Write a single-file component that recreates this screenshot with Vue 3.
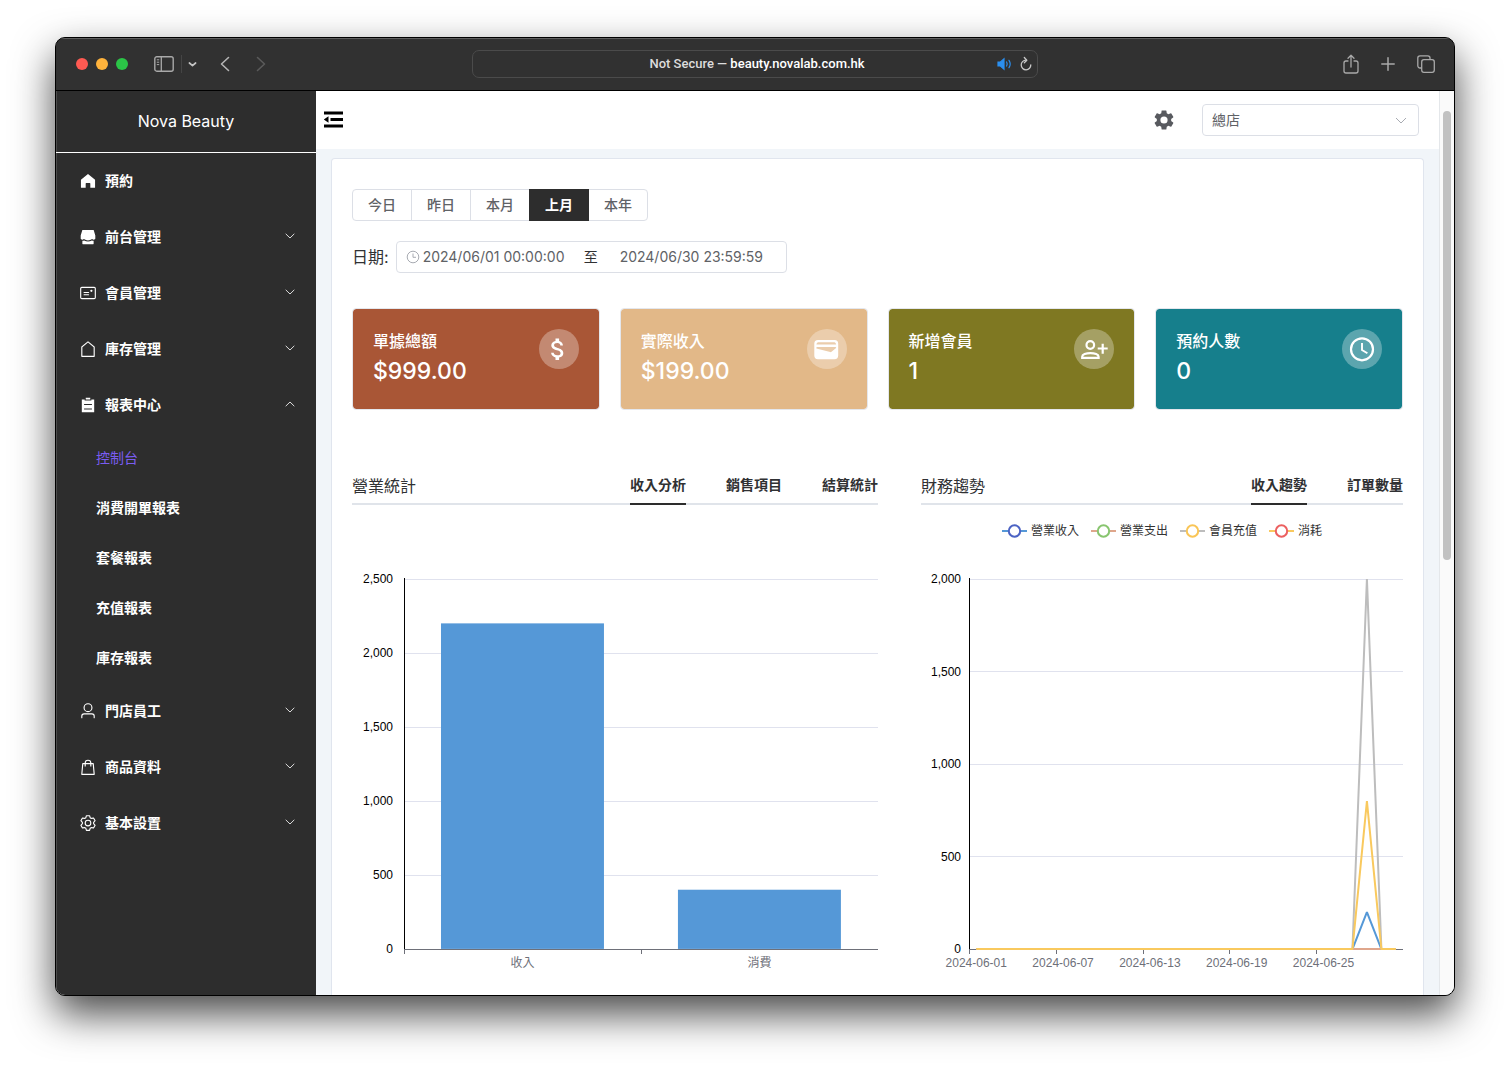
<script setup>
import { ref, computed } from 'vue'

const menu = [
  { label: '預約', icon: 'home' },
  { label: '前台管理', icon: 'shop', group: true },
  { label: '會員管理', icon: 'postcard', group: true },
  { label: '庫存管理', icon: 'house', group: true },
  {
    label: '報表中心', icon: 'list', group: true,
    children: ['控制台', '消費開單報表', '套餐報表', '充值報表', '庫存報表']
  },
  { label: '門店員工', icon: 'user', group: true },
  { label: '商品資料', icon: 'bag', group: true },
  { label: '基本設置', icon: 'setting', group: true }
]

const icons = {
  home: 'M512 110 110 440v440q0 20 20 20h250V660q0-30 30-30h204q30 0 30 30v240h250q20 0 20-20V440z',
  shop: 'M190 110h644l94 310v190q-90 100-180 20-236 150-472 0-90 80-180-20V420zM192 730q60 0 100-20 220 120 440 0 40 20 100 20v170q0 24-24 24H216q-24 0-24-24z',
  postcard: 'M160 224a32 32 0 0 0-32 32v512a32 32 0 0 0 32 32h704a32 32 0 0 0 32-32V256a32 32 0 0 0-32-32zm0-64h704a96 96 0 0 1 96 96v512a96 96 0 0 1-96 96H160a96 96 0 0 1-96-96V256a96 96 0 0 1 96-96M704 320a64 64 0 1 1 0 128 64 64 0 0 1 0-128M288 448h256q32 0 32 32t-32 32H288q-32 0-32-32t32-32m0 128h256q32 0 32 32t-32 32H288q-32 0-32-32t32-32',
  house: 'M192 413.952V896h640V413.952L512 147.328zM139.52 374.4l352-293.312a32 32 0 0 1 40.96 0l352 293.312A32 32 0 0 1 896 398.976V928a32 32 0 0 1-32 32H160a32 32 0 0 1-32-32V398.976a32 32 0 0 1 11.52-24.576',
  list: 'M704 192h160v736H160V192h160v64h384zM288 512h448v-64H288zm0 256h448v-64H288zm96-576V96h256v96z',
  user: 'M512 512a192 192 0 1 0 0-384 192 192 0 0 0 0 384m0 64a256 256 0 1 1 0-512 256 256 0 0 1 0 512m320 320v-96a96 96 0 0 0-96-96H288a96 96 0 0 0-96 96v96a32 32 0 1 1-64 0v-96a160 160 0 0 1 160-160h448a160 160 0 0 1 160 160v96a32 32 0 1 1-64 0',
  bag: 'M897 928a32 32 0 0 1-32 32H159a32 32 0 0 1-32-34l56-610a32 32 0 0 1 32-28h105a192 192 0 0 1 384 0h105a32 32 0 0 1 32 28l56 610zM384 288h256a128 128 0 0 0-256 0M320 352h-76l-50 544h636l-50-544h-76v128h-64V352H384v128h-64z',
  setting: 'M600.704 64a32 32 0 0 1 30.464 22.208l35.2 109.376c14.784 7.232 28.928 15.36 42.432 24.512l112.384-24.192a32 32 0 0 1 34.432 15.36L944.32 364.8a32 32 0 0 1-4.032 37.504l-77.12 85.12a357 357 0 0 1 0 49.024l77.12 85.248a32 32 0 0 1 4.032 37.504l-88.704 153.6a32 32 0 0 1-34.432 15.296L708.8 803.904c-13.44 9.088-27.648 17.28-42.368 24.512l-35.264 109.376A32 32 0 0 1 600.704 960H423.296a32 32 0 0 1-30.464-22.208L357.696 828.48a352 352 0 0 1-42.56-24.64l-112.32 24.256a32 32 0 0 1-34.432-15.36L79.68 659.2a32 32 0 0 1 4.032-37.504l77.12-85.248a357 357 0 0 1 0-48.896l-77.12-85.248A32 32 0 0 1 79.68 364.8l88.704-153.6a32 32 0 0 1 34.432-15.296l112.32 24.256c13.568-9.152 27.776-17.408 42.56-24.64l35.2-109.312A32 32 0 0 1 423.232 64H600.64zm-23.424 64H446.72l-36.352 113.088-24.512 11.968a294 294 0 0 0-34.816 20.096l-22.656 15.36-116.224-25.088-65.28 113.152 79.68 88.192-1.92 27.136a293 293 0 0 0 0 40.192l1.92 27.136-79.808 88.192 65.344 113.152 116.224-25.024 22.656 15.296a294 294 0 0 0 34.816 20.096l24.512 11.968L446.72 896h130.688l36.48-113.152 24.448-11.904a288 288 0 0 0 34.752-20.096l22.592-15.296 116.288 25.024 65.28-113.152-79.744-88.192 1.92-27.136a293 293 0 0 0 0-40.256l-1.92-27.136 79.808-88.128-65.344-113.152-116.288 24.96-22.592-15.232a288 288 0 0 0-34.752-20.096l-24.448-11.904L577.344 128zM512 320a192 192 0 1 1 0 384 192 192 0 0 1 0-384m0 64a128 128 0 1 0 0 256 128 128 0 0 0 0-256'
}

const openGroup = ref('報表中心')
const activePage = ref('控制台')
function toggle(item) {
  if (item.group) openGroup.value = openGroup.value === item.label ? '' : item.label
}

const ranges = ['今日', '昨日', '本月', '上月', '本年']
const range = ref('上月')
const start = ref('2024/06/01 00:00:00')
const end = ref('2024/06/30 23:59:59')

const stats = [
  { label: '單據總額', value: '$999.00', tone: 'rust', icon: 'dollar' },
  { label: '實際收入', value: '$199.00', tone: 'sand', icon: 'wallet' },
  { label: '新增會員', value: '1', tone: 'olive', icon: 'member' },
  { label: '預約人數', value: '0', tone: 'teal', icon: 'clock' }
]

const salesTabs = ['收入分析', '銷售項目', '結算統計']
const salesTab = ref('收入分析')
const trendTabs = ['收入趨勢', '訂單數量']
const trendTab = ref('收入趨勢')

// Plot height shared by both charts
const PLOT = 370

const barTicks = ['0', '500', '1,000', '1,500', '2,000', '2,500']
const bars = [
  { label: '收入', value: 2200 },
  { label: '消費', value: 400 }
].map((b, i) => {
  const band = 237
  const height = (b.value / 2500) * PLOT
  return { ...b, x: 52 + band * i + 37, mid: 52 + band * (i + 0.5), height }
})

const lineTicks = ['0', '500', '1,000', '1,500', '2,000']
const DAYS = 30
const step = 434 / DAYS
const dayLabels = [1, 7, 13, 19, 25].map(d => ({
  text: '2024-06-' + String(d).padStart(2, '0'),
  tick: 48 + (d - 1) * step,
  mid: 48 + (d - 0.5) * step
}))
const legend = [
  { name: '營業收入', line: '#5598d7', dot: '#4c63c4' },
  { name: '營業支出', line: '#dfa68c', dot: '#88c56f' },
  { name: '會員充值', line: '#bdbdbd', dot: '#f9c556' },
  { name: '消耗', line: '#f9c95e', dot: '#ec6060' }
]
const peaks = [200, 0, 2000, 800]
const series = computed(() =>
  legend.map((s, i) => {
    const points = Array.from({ length: DAYS }, (_, d) => {
      const v = d === 27 ? peaks[i] : 0
      return `${48 + (d + 0.5) * step},${22 + PLOT - (v / 2000) * PLOT}`
    }).join(' ')
    return { name: s.name, color: s.line, points }
  })
)
</script>

<template>
  <div class="desktop">
    <div class="window">
      <header class="toolbar">
        <div class="tools-left">
          <div class="lights"><i class="red"></i><i class="amber"></i><i class="green"></i></div>
          <button class="tool sidebar-btn" aria-label="Sidebar">
            <svg width="20" height="16" viewBox="0 0 20 16" fill="none" stroke="#a9a9a9">
              <rect x="0.8" y="0.8" width="18.4" height="14.4" rx="2" stroke-width="1.4" />
              <path d="M7.3 1v14" stroke-width="1.3" /><path d="M2.8 3.8h2.4M2.8 6.2h2.4M2.8 8.6h2.4" />
            </svg>
          </button>
          <span class="rule"></span>
          <button class="tool" aria-label="Tab groups">
            <svg width="9" height="16" viewBox="0 0 9 16" fill="none" stroke="#c4c4c4" stroke-width="1.7" stroke-linecap="round" stroke-linejoin="round"><path d="M1.4 7 4.5 9.6 7.6 7" /></svg>
          </button>
          <button class="tool back" aria-label="Back">
            <svg width="10" height="16" viewBox="0 0 10 16" fill="none" stroke="#b4b4b4" stroke-width="1.6" stroke-linecap="round" stroke-linejoin="round"><path d="M8.5 1.5 1.5 8l7 6.5" /></svg>
          </button>
          <button class="tool forward" aria-label="Forward">
            <svg width="10" height="16" viewBox="0 0 10 16" fill="none" stroke="#5a5a5a" stroke-width="1.6" stroke-linecap="round" stroke-linejoin="round"><path d="m1.5 1.5 7 6.5-7 6.5" /></svg>
          </button>
        </div>
        <div class="address">
          <span class="url">Not Secure — <b>beauty.novalab.com.hk</b></span>
          <button class="tool" aria-label="Mute tab">
            <svg width="16" height="14" viewBox="0 0 16 14" fill="none" stroke="#2b8ff0" stroke-width="1.2" stroke-linecap="round">
              <path d="M1 5h2.4L7 1.8v10.4L3.4 9H1z" fill="#2b8ff0" /><path d="M9.6 5q1.2 2 0 4M12 3.3q2.4 3.7 0 7.4" />
            </svg>
          </button>
          <button class="tool reload" aria-label="Reload">
            <svg width="12" height="16" viewBox="0 0 12 16" fill="none" stroke="#c8c8c8" stroke-width="1.3" stroke-linecap="round" stroke-linejoin="round">
              <path d="M10.8 8.800A4.800 4.800 0 1 1 6 4.200" /><path d="M4.300 1.500 6.800 4.200 4.300 6.700" />
            </svg>
          </button>
        </div>
        <div class="tools-right">
          <button class="tool" aria-label="Share">
            <svg width="16" height="20" viewBox="0 0 16 20" fill="none" stroke="#a9a9a9" stroke-width="1.3" stroke-linecap="round" stroke-linejoin="round">
              <path d="M5 7H3a2 2 0 0 0-2 2v8a2 2 0 0 0 2 2h10a2 2 0 0 0 2-2V9a2 2 0 0 0-2-2h-2M8 13V1.500M5 4.200 8 1.200l3 3" />
            </svg>
          </button>
          <button class="tool" aria-label="New tab">
            <svg width="14" height="14" viewBox="0 0 14 14" stroke="#a9a9a9" stroke-width="1.5" stroke-linecap="round"><path d="M7 .8v12.400M.8 7h12.400" /></svg>
          </button>
          <button class="tool" aria-label="Tab overview">
            <svg width="18" height="18" viewBox="0 0 18 18" fill="none" stroke="#a9a9a9" stroke-width="1.3">
              <rect x="4.700" y="4.700" width="12.600" height="12.600" rx="2.200" /><path d="M4.500 13H3a2.200 2.200 0 0 1-2.200-2.200V3A2.200 2.200 0 0 1 3 .8h7.800A2.200 2.200 0 0 1 13 3v1.500" />
            </svg>
          </button>
        </div>
      </header>

      <div class="viewport">
        <aside class="sidebar">
          <h1 class="brand">Nova Beauty</h1>
          <nav>
            <template v-for="item in menu" :key="item.label">
              <button class="menu-item" :aria-expanded="item.group ? openGroup === item.label : undefined" @click="toggle(item)">
                <svg class="menu-icon" viewBox="0 0 1024 1024" fill="currentColor" fill-rule="evenodd"><path :d="icons[item.icon]" /></svg>
                <span>{{ item.label }}</span>
                <svg v-if="item.group" class="caret" :class="{ up: item.children && openGroup === item.label }" viewBox="0 0 10 6" fill="none" stroke="currentColor"><path d="M.7.800 5 5 9.300.800" /></svg>
              </button>
              <ul v-if="item.children && openGroup === item.label" class="submenu">
                <li v-for="child in item.children" :key="child">
                  <a href="#" :class="{ active: activePage === child }" @click.prevent="activePage = child">{{ child }}</a>
                </li>
              </ul>
            </template>
          </nav>
        </aside>

        <div class="page">
          <header class="topbar">
            <button class="plain" aria-label="Collapse menu">
              <svg width="20" height="18" viewBox="0 0 20 18"><path d="M1 .500h19v3H1zM7.500 7h12.500v3H7.500zM1 13.500h19v3H1zM.800 8.500l4.700-3.200v6.400z" /></svg>
            </button>
            <div class="topbar-right">
              <button class="plain" aria-label="Settings">
                <svg width="24" height="24" viewBox="0 0 24 24" fill="#585a5f"><path d="M19.140 12.940c.04-.3.06-.61.06-.94 0-.32-.02-.64-.07-.94l2.030-1.580a.49.49 0 0 0 .12-.61l-1.920-3.320a.488.488 0 0 0-.59-.22l-2.390.96c-.5-.38-1.030-.7-1.620-.94l-.36-2.540a.484.484 0 0 0-.48-.41h-3.840c-.24 0-.43.17-.47.41l-.36 2.540c-.59.24-1.130.57-1.620.94l-2.390-.96c-.22-.08-.47 0-.59.22L2.740 8.870c-.12.21-.08.47.12.61l2.030 1.580c-.05.3-.09.63-.09.94s.02.64.07.94l-2.030 1.580a.49.49 0 0 0-.12.61l1.920 3.320c.12.22.37.29.59.22l2.390-.96c.5.38 1.030.7 1.620.94l.36 2.540c.05.24.24.41.48.41h3.840c.24 0 .44-.17.47-.41l.36-2.540c.59-.24 1.130-.56 1.620-.94l2.390.96c.22.08.47 0 .59-.22l1.920-3.320c.12-.22.07-.47-.12-.61zM12 15.600A3.600 3.600 0 1 1 12 8.400a3.600 3.600 0 0 1 0 7.200z" /></svg>
              </button>
              <div class="store">
                <select aria-label="門店"><option>總店</option></select>
                <svg class="select-caret" width="12" height="7" viewBox="0 0 12 7" fill="none" stroke="#a8abb2"><path d="M1 1l5 5 5-5" /></svg>
              </div>
            </div>
          </header>

          <main class="card">
            <div class="ranges">
              <button v-for="r in ranges" :key="r" :class="{ active: range === r }" :aria-pressed="range === r" @click="range = r">{{ r }}</button>
            </div>

            <div class="dates">
              <label for="date-start">日期:</label>
              <div class="date-box">
                <svg width="14" height="14" viewBox="0 0 14 14" fill="none" stroke="#a8abb2"><circle cx="7" cy="7" r="5.800" /><path d="M7 3.500V7.300h3" /></svg>
                <input id="date-start" v-model="start" type="text">
                <span>至</span>
                <input v-model="end" type="text" aria-label="結束日期">
              </div>
            </div>

            <section class="stats">
              <article v-for="s in stats" :key="s.label" class="stat" :class="s.tone">
                <div>
                  <h2>{{ s.label }}</h2>
                  <p>{{ s.value }}</p>
                </div>
                <svg class="badge" viewBox="0 0 40 40" fill="none" stroke="#fff">
                  <g v-if="s.icon === 'dollar'" transform="translate(4.500 5.800) scale(1.200)" fill="#fff" stroke="none"><path d="M11.800 10.900c-2.270-.59-3-1.200-3-2.150 0-1.090 1.010-1.850 2.700-1.850 1.780 0 2.440.85 2.500 2.100h2.210c-.07-1.720-1.120-3.300-3.210-3.810V3h-3v2.160c-1.940.42-3.500 1.680-3.500 3.610 0 2.310 1.910 3.460 4.700 4.130 2.500.6 3 1.480 3 2.410 0 .69-.49 1.790-2.700 1.790-2.060 0-2.870-.92-2.980-2.100h-2.200c.12 2.190 1.760 3.420 3.680 3.830V21h3v-2.150c1.950-.37 3.500-1.500 3.500-3.550 0-2.840-2.430-3.810-4.700-4.400z" /></g>
                  <path v-else-if="s.icon === 'wallet'" fill="#fff" stroke="none" fill-rule="evenodd" d="M11 11h16.500a3.700 3.700 0 0 1 3.700 3.700v11.800a3.700 3.700 0 0 1-3.700 3.700H11a3.700 3.700 0 0 1-3.700-3.700V14.700A3.700 3.700 0 0 1 11 11zM11 13.200q-1.400.2-1.600 2.200h19.700q-.2-2-1.600-2.200zM9.400 18.200v1.300l13.800 3.600q.7.200 1.300-.3l4.600-3.700v-.9l-1-.3H10.200z" />
                  <g v-else-if="s.icon === 'member'" stroke-width="2.200"><circle cx="16.300" cy="16" r="3.800" /><path d="M8.200 28.900v-1.200c0-2.200 3.800-3.600 8.200-3.600s8.200 1.400 8.200 3.600v1.200zM28.700 14.700v10M23.700 19.500h10" /></g>
                  <g v-else stroke-width="2.200"><circle cx="20" cy="20.300" r="11" /><path d="M20 14v7l5.400 3.300" stroke-width="1.900" /></g>
                </svg>
              </article>
            </section>

            <div class="charts">
              <section>
                <header class="chart-head">
                  <h2>營業統計</h2>
                  <div class="tabs">
                    <button v-for="t in salesTabs" :key="t" :class="{ active: salesTab === t }" @click="salesTab = t">{{ t }}</button>
                  </div>
                </header>
                <svg class="plot" viewBox="0 0 526 470" role="img" aria-label="營業統計">
                  <g v-for="(t, i) in barTicks" :key="t">
                    <path class="grid" :d="`M52 ${444.5 - i * 74}H526`" />
                    <text class="y" x="41" :y="448 - i * 74">{{ t }}</text>
                  </g>
                  <rect v-for="b in bars" :key="b.label" :x="b.x" :y="444 - b.height" width="163" :height="b.height" fill="#5598d7" />
                  <path class="axis-y" d="M52.500 73V444" />
                  <path class="axis-x" d="M52 444.500H526M52.500 444v5M289.500 444v5" />
                  <text v-for="b in bars" :key="b.label" class="x" :x="b.mid" y="462">{{ b.label }}</text>
                </svg>
              </section>

              <section>
                <header class="chart-head">
                  <h2>財務趨勢</h2>
                  <div class="tabs">
                    <button v-for="t in trendTabs" :key="t" :class="{ active: trendTab === t }" @click="trendTab = t">{{ t }}</button>
                  </div>
                </header>
                <ul class="legend">
                  <li v-for="l in legend" :key="l.name">
                    <svg width="25" height="14" viewBox="0 0 25 14" stroke-width="2"><path d="M0 7h25" :stroke="l.line" /><circle cx="12.500" cy="7" r="5.700" fill="#fff" :stroke="l.dot" /></svg>
                    <span>{{ l.name }}</span>
                  </li>
                </ul>
                <svg class="plot" viewBox="0 0 482 418" role="img" aria-label="財務趨勢">
                  <g v-for="(t, i) in lineTicks" :key="t">
                    <path class="grid" :d="`M48 ${392.4 - i * 92.5}H482`" />
                    <text class="y" x="40" :y="396 - i * 92.5">{{ t }}</text>
                  </g>
                  <path class="axis-y" d="M48.500 21V392" />
                  <path class="axis-x" d="M48 392.500H482" />
                  <g v-for="d in dayLabels" :key="d.text">
                    <path class="axis-x" :d="`M${d.tick + 0.5} 392v5`" />
                    <text class="x" :x="d.mid" y="410">{{ d.text }}</text>
                  </g>
                  <polyline v-for="s in series" :key="s.name" :points="s.points" fill="none" :stroke="s.color" stroke-width="2" stroke-linejoin="bevel" />
                </svg>
              </section>
            </div>
          </main>
        </div>

        <div class="scrollbar"><div class="thumb"></div></div>
      </div>
    </div>
  </div>
</template>

<style>
body { margin: 0; background: #fff; }
</style>

<style scoped>
* { box-sizing: border-box; }
h1, h2, p, ul { margin: 0; padding: 0; font-weight: inherit; }
ul { list-style: none; }
button, input, select { font: inherit; color: inherit; border: 0; background: none; padding: 0; margin: 0; }
svg { display: block; flex: none; }

.desktop {
  display: flex;
  min-height: 100vh;
  padding: 37px 55px 73px;
  font: 14px/20px Inter, "Noto Sans CJK TC", sans-serif;
  color: #303133;
}
.window {
  flex: 1;
  min-width: 0;
  display: flex;
  flex-direction: column;
  border: 1px solid #000;
  border-radius: 10px;
  overflow: hidden;
  background: #2d2d2d;
  box-shadow: 0 18px 40px rgba(0, 0, 0, 0.72);
}

.toolbar {
  display: grid;
  grid-template-columns: 1fr 566px 1fr;
  align-items: center;
  height: 53px;
  padding-bottom: 2px;
  border-top: 1px solid #5e5e5e;
  border-bottom: 1px solid #000;
  background: #313131;
}
.tool { display: flex; }
.tools-left, .tools-right { display: flex; align-items: center; }
.tools-left { padding-left: 20px; }
.lights { display: flex; gap: 8px; }
.lights i { width: 12px; height: 12px; border-radius: 50%; }
.red { background: #ff5a52; }
.amber { background: #ffb33c; }
.green { background: #2bc547; }
.sidebar-btn { margin-left: 26px; }
.rule { width: 1px; height: 18px; margin: 0 6px 0 7px; background: #454545; }
.back { margin-left: 23px; }
.forward { margin-left: 26px; }
.address {
  display: flex;
  align-items: center;
  height: 28px;
  padding: 0 5px 0 44px;
  border: 1px solid #4b4b4b;
  border-radius: 7px;
}
.url { flex: 1; text-align: center; font-family: Roboto, sans-serif; font-size: 13px; font-weight: 500; color: #dcdcdc; }
.url b { font-weight: 500; color: #fff; }
.reload { margin-left: 7px; }
.tools-right { justify-content: flex-end; gap: 22px; padding-right: 19px; }

.viewport { flex: 1; display: flex; background: #f1f5f9; }

.sidebar { flex: none; width: 260px; background: #2d2d2d; color: #fff; box-shadow: inset 1px 0 #4c4c4c; }
.brand {
  height: 62px;
  border-bottom: 1px solid #fff;
  font-size: 16px;
  line-height: 61px;
  text-align: center;
}
.menu-item {
  display: flex;
  align-items: center;
  gap: 8px;
  width: 100%;
  height: 56px;
  padding: 0 21px 0 23px;
  font-weight: 700;
}
.menu-icon { width: 18px; height: 18px; }
.caret { width: 10px; height: 6px; margin: 0 0 2px auto; color: #dcdcdc; }
.caret.up { transform: rotate(180deg); }
.submenu a {
  display: block;
  padding-left: 40px;
  line-height: 50px;
  font-weight: 700;
  color: #fff;
  text-decoration: none;
}
.submenu a.active { color: #7a5cf0; font-weight: 400; }

.page { flex: 1; min-width: 0; display: flex; flex-direction: column; }
.topbar {
  display: flex;
  align-items: center;
  justify-content: space-between;
  height: 58px;
  padding: 0 20px 0 7px;
  background: #fff;
}
.plain { display: flex; }
.topbar-right { display: flex; align-items: center; gap: 26px; }
.store { display: grid; align-items: center; }
.store > * { grid-area: 1 / 1; }
.store select {
  appearance: none;
  width: 217px;
  height: 32px;
  padding: 0 9px;
  border: 1px solid #dcdfe6;
  border-radius: 4px;
  background: #fff;
  color: #606266;
}
.select-caret { justify-self: end; margin-right: 12px; pointer-events: none; }

.card {
  flex: 1;
  margin: 9px 15px 0;
  padding: 30px 20px 0;
  border: 1px solid #e0e5ee;
  border-bottom: 0;
  border-radius: 4px 4px 0 0;
  background: #fff;
}
.ranges { display: flex; }
.ranges button {
  width: 60px;
  height: 32px;
  margin-right: -1px;
  border: 1px solid #dcdfe6;
  font-weight: 500;
  color: #606266;
}
.ranges button:first-child { border-radius: 4px 0 0 4px; }
.ranges button:last-child { border-radius: 0 4px 4px 0; }
.ranges button.active { position: relative; border-color: #2d2d2d; background: #2d2d2d; color: #fff; font-weight: 700; }

.dates { display: flex; align-items: center; gap: 7px; margin-top: 20px; }
.dates label { font-size: 16px; }
.date-box {
  display: flex;
  align-items: center;
  width: 391px;
  height: 32px;
  padding: 0 10px 0 9px;
  border: 1px solid #dcdfe6;
  border-radius: 4px;
}
.date-box input { width: 146px; margin-left: 3px; color: #606266; }
.date-box span { width: 31px; margin-right: 17px; padding-left: 15px; white-space: nowrap; }

.stats { display: grid; grid-template-columns: repeat(4, 1fr); gap: 20px; margin-top: 35px; }
.stat {
  display: flex;
  justify-content: space-between;
  height: 102px;
  padding: 20px;
  border: 1px solid #e4e7ed;
  border-radius: 4px;
  background-clip: padding-box;
  color: #fff;
}
.stat h2 { font-size: 16px; line-height: 24px; font-weight: 500; }
.stat p { font-size: 23px; line-height: 36px; font-weight: 500; }
.badge { width: 40px; height: 40px; border-radius: 50%; background: rgba(255, 255, 255, 0.3); }
.rust { background-color: #a95636; }
.sand { background-color: #e2b888; }
.olive { background-color: #7f7822; }
.teal { background-color: #167f8c; }

.charts { display: grid; grid-template-columns: 12fr 11fr; gap: 43px; margin-top: 60px; }
.chart-head { display: flex; justify-content: space-between; height: 35px; border-bottom: 2px solid #e0e4ea; }
.chart-head h2 { font-size: 16px; line-height: 32px; }
.tabs { display: flex; gap: 40px; }
.tabs button { height: 35px; padding-bottom: 3px; border-bottom: 2px solid transparent; font-weight: 700; }
.tabs button.active { border-color: #2d2d2d; }
.legend { display: flex; justify-content: center; align-items: center; gap: 12px; height: 52px; }
.legend li { display: flex; align-items: center; gap: 4px; font-size: 12px; color: #333; }
.plot { width: 100%; font-family: "Liberation Sans", "Noto Sans CJK TC", sans-serif; font-size: 12px; }
.grid { stroke: #e0e2ee; shape-rendering: crispEdges; }
.axis-y { stroke: #000; shape-rendering: crispEdges; }
.axis-x { stroke: #6e7079; shape-rendering: crispEdges; }
.y { text-anchor: end; fill: #000; }
.x { text-anchor: middle; fill: #6e7079; }

.scrollbar { flex: none; width: 15px; padding: 20px 3px; border-left: 1px solid #e4e7ea; background: #fafafa; }
.thumb { width: 8px; height: 52%; border-radius: 4px; background: #c1c1c1; }
</style>
